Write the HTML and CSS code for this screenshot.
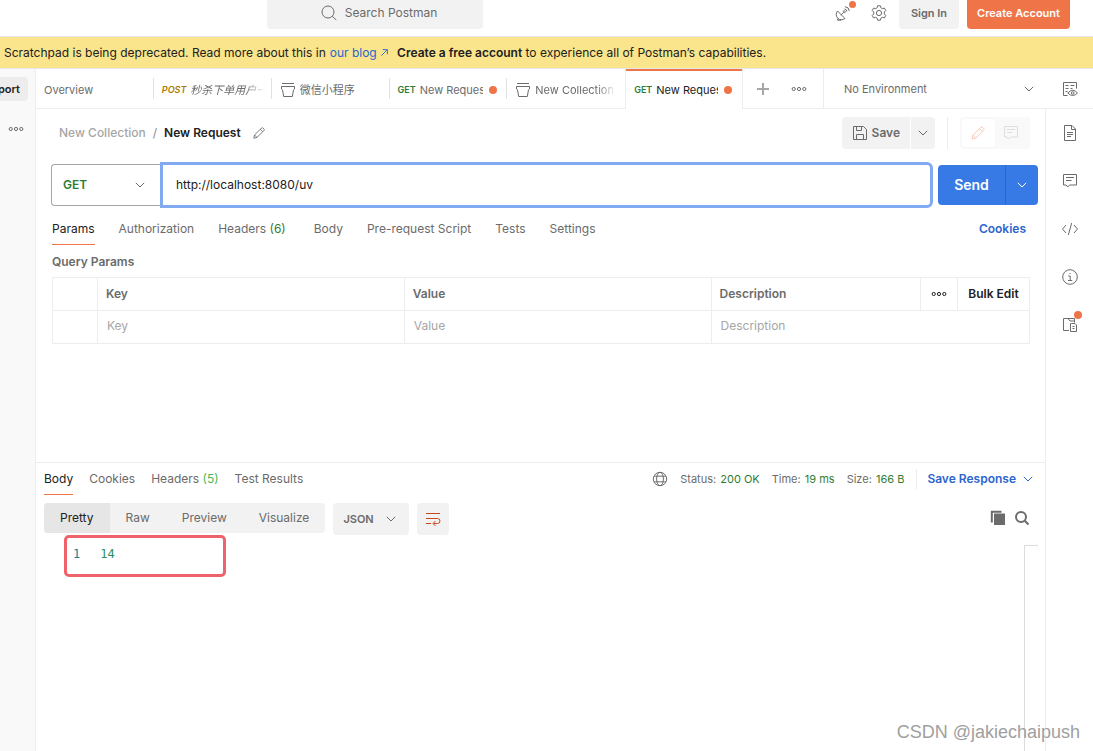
FILE: index.html
```
<!DOCTYPE html>
<html lang="en">
<head>
<meta charset="utf-8">
<meta name="viewport" content="width=device-width, initial-scale=1">
<title>Postman</title>
<link rel="stylesheet" href="styles.css">
</head>
<body>
<svg class="sprite" aria-hidden="true">
  <symbol id="chevron" viewBox="0 0 16 16"><path d="M3.8 5.8 8 10l4.2-4.2"/></symbol>
  <symbol id="dots" viewBox="0 0 16 16"><circle cx="2.700" cy="8" r="1.600"/><circle cx="8" cy="8" r="1.600"/><circle cx="13.300" cy="8" r="1.600"/></symbol>
  <symbol id="bucket" viewBox="0 0 16 16"><path d="M2 1.500h12M1.500 4.500h13v2.500l-1 .8-1.200 6.700H3.700L2.500 7.800l-1-.8z"/></symbol>
  <symbol id="pencil" viewBox="0 0 16 16"><path d="M2 14l.9-3.700 8-8q.8-.8 1.600 0l1.200 1.200q.8.800 0 1.600l-8 8zM9.500 3.700l2.800 2.800M2.900 10.300l2.800 2.800"/></symbol>
  <symbol id="comment" viewBox="0 0 16 16"><path d="M1.500 1.500h13v10.500H7.500l-1.800 2-1.700-2H1.500zM4 4.500h8M4 7.500h5.500"/></symbol>
</svg>

<header class="topbar">
  <button class="search" type="button">
    <svg class="icon" viewBox="0 0 16 16"><circle cx="7" cy="7" r="6"/><path d="M11.300 11.300 15.300 15"/></svg>
    <span>Search Postman</span>
  </button>
  <div class="top-actions">
    <button class="icon-btn has-dot" type="button" aria-label="Capture requests">
      <svg class="icon" viewBox="0 0 16 16"><path d="M2.500 6C.7 8.300.900 11.300 2.700 13.200c1.900 1.900 5 2.100 7.300.3zM5.800 10.200l2.900-2.900M3 13.500l-.5 1.700h3.700M9.500 4q2.300.2 2.500 2.500M10 1.700q4 .3 4.300 4.300"/><circle cx="9.300" cy="6.700" r="1"/></svg>
      <span class="dot dot-corner"></span>
    </button>
    <button class="icon-btn" type="button" aria-label="Settings">
      <svg class="icon" viewBox="0 0 16 16"><path d="M6.600.8h2.800l.5 2 1.500.9 2-.6 1.400 2.400L13.300 7v2l1.500 1.500-1.400 2.400-2-.6-1.500.9-.5 2H6.600l-.5-2-1.500-.9-2 .6-1.400-2.400L2.700 9V7L1.200 5.500l1.400-2.400 2 .6 1.500-.9z"/><circle cx="8" cy="8" r="2.600"/></svg>
    </button>
    <button class="btn btn-plain" type="button">Sign In</button>
    <button class="btn btn-accent" type="button">Create Account</button>
  </div>
</header>

<p class="banner">
  <span>Scratchpad is being deprecated. Read more about this in</span>
  <a href="#">our blog <svg class="arrow" viewBox="0 0 10 10"><path d="M1.500 8.500l6.500-6.500M3 1.800h5.200V7"/></svg></a>
  <span><b>Create a free account</b> to experience all of Postman’s capabilities.</span>
</p>

<div class="shell">
  <aside class="sidebar">
    <div class="import-row"><button class="import" type="button"><span>Import</span></button></div>
    <button class="icon-btn side-more" type="button" aria-label="More options"><svg class="icon"><use href="#dots"/></svg></button>
  </aside>

  <div class="content">
    <div class="tabstrip">
      <nav class="tabs" aria-label="Open tabs">
        <button class="tab" type="button"><span class="tab-name">Overview</span></button>
        <button class="tab preview" type="button"><em class="method post">POST</em><em class="tab-name fade">秒杀下单用户一</em></button>
        <button class="tab" type="button"><svg class="icon"><use href="#bucket"/></svg><span class="tab-name">微信小程序</span></button>
        <button class="tab" type="button"><span class="method get">GET</span><span class="tab-name clip">New Request</span><span class="dot"></span></button>
        <button class="tab" type="button"><svg class="icon"><use href="#bucket"/></svg><span class="tab-name fade">New Collection</span></button>
        <button class="tab active" type="button"><span class="method get">GET</span><span class="tab-name clip">New Request</span><span class="dot"></span></button>
      </nav>
      <div class="tab-tools">
        <button class="icon-btn" type="button" aria-label="New tab"><svg class="icon plus" viewBox="0 0 16 16"><path d="M8 2v12M2 8h12"/></svg></button>
        <button class="icon-btn" type="button" aria-label="Tab options"><svg class="icon"><use href="#dots"/></svg></button>
      </div>
      <div class="environment">
        <select class="env-select" aria-label="Environment"><option>No Environment</option></select>
        <svg class="icon chev"><use href="#chevron"/></svg>
      </div>
      <button class="icon-btn env-view" type="button" aria-label="Environment quick look">
        <svg class="icon" viewBox="0 0 16 16"><path d="M5.500 14.500h-4v-13h13v6M3.500 4.500h3M3.500 7.500h3M3.500 10.500h2M8.500 4.500h4M8.500 7.500h2M5.800 12q5-5.500 9.700 0-4.700 5-9.700 0z"/><circle cx="10.700" cy="12" r="1.300"/></svg>
      </button>
    </div>

    <div class="workspace">
      <main class="panes">
        <section class="request">
          <div class="title-row">
            <div class="crumbs"><a href="#">New Collection</a><span class="slash">/</span><h1>New Request</h1>
              <button class="icon-btn" type="button" aria-label="Rename"><svg class="icon rename" viewBox="0 0 16 16"><use href="#pencil"/></svg></button></div>
            <div class="save-group">
              <button class="save" type="button"><svg class="icon" viewBox="0 0 16 16"><path d="M1.500 1.500h10l3 3v10h-13zM4.500 1.500v4h5v-4M4.500 14.500v-5h7v5"/></svg>Save</button>
              <button class="save-more" type="button" aria-label="Save options"><svg class="icon chev"><use href="#chevron"/></svg></button>
            </div>
            <div class="mode-wrap">
              <div class="mode">
                <button class="mode-btn on" type="button" aria-label="Build"><svg class="icon"><use href="#pencil"/></svg></button>
                <button class="mode-btn" type="button" aria-label="Comment"><svg class="icon"><use href="#comment"/></svg></button>
              </div>
            </div>
          </div>

          <form class="url-row">
            <div class="method-box">
              <select class="method-select" aria-label="Method"><option>GET</option></select>
              <svg class="icon chev"><use href="#chevron"/></svg>
            </div>
            <input class="url" type="text" aria-label="Request URL" value="http://localhost:8080/uv">
            <div class="send-group">
              <button class="send" type="button">Send</button>
              <button class="send-more" type="button" aria-label="Send options"><svg class="icon chev"><use href="#chevron"/></svg></button>
            </div>
          </form>

          <nav class="subtabs request-tabs" aria-label="Request sections">
            <button class="subtab current" type="button">Params</button>
            <button class="subtab" type="button">Authorization</button>
            <button class="subtab with-count" type="button">Headers <span class="count">(6)</span></button>
            <button class="subtab" type="button">Body</button>
            <button class="subtab" type="button">Pre-request Script</button>
            <button class="subtab" type="button">Tests</button>
            <button class="subtab" type="button">Settings</button>
            <a class="cookies" href="#">Cookies</a>
          </nav>

          <h2 class="params-title">Query Params</h2>
          <table class="params">
            <colgroup><col class="c-check"><col class="c-key"><col class="c-value"><col><col class="c-more"><col class="c-bulk"></colgroup>
            <thead>
              <tr><th></th><th>Key</th><th>Value</th><th>Description</th>
                <th class="tool"><button class="icon-btn dark" type="button" aria-label="Column options"><svg class="icon"><use href="#dots"/></svg></button></th>
                <th class="tool"><button class="bulk" type="button">Bulk Edit</button></th></tr>
            </thead>
            <tbody>
              <tr><td></td><td><input type="text" placeholder="Key" aria-label="Key"></td><td><input type="text" placeholder="Value" aria-label="Value"></td><td colspan="3"><input type="text" placeholder="Description" aria-label="Description"></td></tr>
            </tbody>
          </table>
        </section>

        <section class="response">
          <div class="response-head">
            <nav class="subtabs response-tabs" aria-label="Response sections">
              <button class="subtab current" type="button">Body</button>
              <button class="subtab" type="button">Cookies</button>
              <button class="subtab" type="button">Headers <span class="count bright">(5)</span></button>
              <button class="subtab" type="button">Test Results</button>
            </nav>
            <div class="stats">
              <svg class="icon globe" viewBox="0 0 16 16"><circle cx="8" cy="8" r="6.700"/><ellipse cx="8" cy="8" rx="3.400" ry="6.700"/><path d="M2.300 5.200h11.400M2.300 10.800h11.400"/></svg>
              <span>Status: <b>200 OK</b></span><span>Time: <b>19 ms</b></span><span>Size: <b>166 B</b></span>
            </div>
            <button class="save-response" type="button">Save Response<svg class="icon chev"><use href="#chevron"/></svg></button>
          </div>

          <div class="viewbar">
            <div class="views">
              <button class="view on" type="button">Pretty</button>
              <button class="view" type="button">Raw</button>
              <button class="view" type="button">Preview</button>
              <button class="view" type="button">Visualize</button>
            </div>
            <div class="format">
              <select class="format-select" aria-label="Format"><option>JSON</option></select>
              <svg class="icon chev"><use href="#chevron"/></svg>
            </div>
            <button class="wrap" type="button" aria-label="Wrap lines"><svg class="icon" viewBox="0 0 16 16"><path d="M1 2.500h14M1 7.500h11.500q2.500 0 2.500 2.500t-2.500 2.500H8.500M1 12.500h5M10.500 10l-2.500 2.500 2.500 2.500"/></svg></button>
            <div class="view-actions">
              <button class="icon-btn" type="button" aria-label="Copy"><svg class="icon copy" viewBox="0 0 16 16"><path class="solid" d="M4 3.500h11v11.500H4z"/><path class="back" d="M1.800 12.500V1.800H11.500"/></svg></button>
              <button class="icon-btn" type="button" aria-label="Search"><svg class="icon find" viewBox="0 0 16 16"><circle cx="7" cy="7" r="5"/><path d="M10.700 10.700 14.500 14.500"/></svg></button>
            </div>
          </div>

          <div class="code">
            <div class="code-line"><span class="line-no">1</span><code>14</code></div>
            <div class="ruler"></div>
          </div>
        </section>
      </main>

      <aside class="rail">
        <button class="icon-btn" type="button" aria-label="Documentation"><svg class="icon" viewBox="0 0 16 16"><path d="M2.500.5h7.500l3.500 3.500v11.500h-11zM9.500.5v4h4M5 7.500h6M5 9.500h6M5 11.500h4"/></svg></button>
        <button class="icon-btn" type="button" aria-label="Comments"><svg class="icon"><use href="#comment"/></svg></button>
        <button class="icon-btn" type="button" aria-label="Code"><svg class="icon" viewBox="0 0 16 16"><path d="M4 4 .5 8 4 12M12 4l3.500 4L12 12M9.700 2 6.300 14"/></svg></button>
        <button class="icon-btn" type="button" aria-label="Info"><svg class="icon" viewBox="0 0 16 16"><circle cx="8" cy="8" r="7.300"/><path d="M6.300 7h1.900v4.300M6 11.500h4.200M7.500 4.600h1.200"/></svg></button>
        <button class="icon-btn has-dot" type="button" aria-label="Related requests"><svg class="icon" viewBox="0 0 16 16"><path d="M7 13.500H1.500v-12H6l2 2.500h4.500v1.500M5.500 1.500h7v2.500M9.500 6.500h3.500l1.500 1.500v6.500h-6v-8zM10.500 9.500h2M10.500 11.500h2"/></svg><span class="dot dot-corner"></span></button>
      </aside>
    </div>
  </div>
</div>
<div class="watermark">CSDN @jakiechaipush</div>
</body>
</html>
```
FILE: styles.css
```
:root {
  --text: #212121;
  --muted: #6b6b6b;
  --faint: #a6a6a6;
  --line: #ededed;
  --fill: #f2f2f2;
  --accent: #ef7549;
  --blue: #2a65d0;
  --green: #2f7d35;
}
* { box-sizing: border-box; }
body {
  position: relative;
  display: flex;
  flex-direction: column;
  min-height: 100vh;
  margin: 0;
  overflow: hidden;
  background: #fff;
  color: var(--text);
  font: 12px/16px Inter, "Noto Sans CJK SC", sans-serif;
}
button, input, select { margin: 0; padding: 0; border: 0; background: none; color: inherit; font: inherit; }
select { appearance: none; width: 100%; }
a { color: var(--blue); text-decoration: none; }
h1, h2, p { margin: 0; font-size: 12px; line-height: 16px; font-weight: 600; }
.sprite { display: none; }
.icon { display: block; flex: none; width: 16px; height: 16px; fill: none; stroke: currentColor; stroke-width: 1; }
.chev { color: var(--muted); }
.icon-btn { position: relative; display: flex; flex: none; color: var(--muted); }
.dot { flex: none; width: 8px; height: 8px; border-radius: 50%; background: var(--accent); }
.dot-corner { position: absolute; top: -6px; right: -4px; }

/* Top bar */
.topbar { display: flex; justify-content: flex-end; height: 37px; border-bottom: 1px solid #e6e6e6; }
.search {
  display: flex; align-items: center; justify-content: center; gap: 8px;
  width: 216px; height: 29px; margin: 0 auto 0 267px; padding: 0 0 3px 8px;
  border-radius: 0 0 4px 4px; background: var(--fill); color: var(--muted);
}
.top-actions { display: flex; align-items: center; gap: 8px; height: 29px; padding-right: 23px; }
.top-actions .icon-btn { margin: 0 6px; bottom: 2px; }
.top-actions .dot-corner { width: 7px; height: 7px; top: -4px; right: -5px; }
.btn { height: 29px; padding: 0 10px 3px; border-radius: 0 0 4px 4px; font-size: 11px; font-weight: 600; }
.top-actions .btn-plain { min-width: 60px; margin-left: -2px; background: var(--fill); color: var(--muted); }
.btn-accent { min-width: 103px; background: var(--accent); color: #fff; }

.banner {
  display: flex; gap: 4px; align-items: center; height: 32px; padding: 0 4px;
  border-bottom: 1px solid #e6e6e6; background: #fae48c; font-weight: 400; white-space: nowrap;
}
.banner a { margin-right: 4px; }
.banner b { font-weight: 600; }
.arrow { width: 9px; height: 9px; fill: none; stroke: currentColor; }

/* Shell */
.shell { display: flex; flex: 1; min-height: 0; }
.sidebar { flex: none; width: 36px; border-right: 1px solid var(--line); background: #f9f9f9; }
.import-row { display: flex; justify-content: flex-end; height: 40px; padding: 8px 7px; }
.import { display: flex; flex: none; align-items: center; height: 24px; padding: 0 8px; border-radius: 4px; background: #ededed; font-size: 11px; font-weight: 600; }
.side-more { margin: 12px 0 0 8px; }
.content { display: flex; flex: 1; flex-direction: column; min-width: 0; }

.tabstrip { display: flex; height: 40px; border-bottom: 1px solid var(--line); }
.tabs { display: grid; grid-template-columns: repeat(6, 1fr); width: 707px; }
.tab { position: relative; display: flex; align-items: center; gap: 4px; min-width: 0; height: 39px; padding: 3px 8px 0; color: var(--muted); font-size: 11px; text-align: left; }
.tab::after { content: ""; position: absolute; top: 9px; right: 0; width: 1px; height: 21px; background: #e2e2e2; }
.tab:nth-last-child(-n+2)::after { display: none; }
.tab.active { height: 40px; padding-bottom: 1px; border: 1px solid var(--line); border-width: 0 1px; background: #fff; color: var(--text); box-shadow: inset 0 2px var(--accent); }
.method { flex: none; font-size: 9px; font-weight: 600; }
.get { color: var(--green); }
.post { color: #ad7a03; }
.tab-name { min-width: 0; overflow: hidden; white-space: nowrap; }
.clip { flex: 1; }
.tab .dot { margin: 0 2px; }
.fade { flex: 1; -webkit-mask-image: linear-gradient(90deg, #000 75%, transparent); mask-image: linear-gradient(90deg, #000 75%, transparent); }
.tab-tools { display: flex; gap: 20px; align-items: center; width: 81px; padding: 0 12px; border-right: 1px solid var(--line); }
.plus { stroke: #a6a6a6; stroke-width: 2; }
.environment { position: relative; flex: 1; display: flex; min-width: 120px; }
.environment .chev { position: absolute; right: 25px; top: 12px; pointer-events: none; }
.env-select { padding: 0 40px 0 20px; color: var(--muted); font-size: 11px; }
.env-view { align-items: center; margin-right: 15px; }

.workspace { display: flex; flex: 1; min-height: 0; }
.panes { display: flex; flex: 1; flex-direction: column; min-width: 0; }
.rail { display: flex; flex: none; flex-direction: column; gap: 32px; align-items: center; width: 48px; padding-top: 16px; border-left: 1px solid var(--line); }

/* Request */
.request { height: 353px; padding: 8px 15px 0; }
.title-row { display: flex; align-items: center; height: 32px; }
.crumbs { display: flex; gap: 7px; align-items: center; margin-right: auto; padding-left: 8px; }
.crumbs a { color: var(--faint); font-weight: 500; }
.slash { color: #8a8a8a; }
.rename { width: 14px; height: 14px; margin-left: 4px; }
.save-group { display: flex; gap: 1px; color: var(--muted); }
.save { display: flex; gap: 4px; align-items: center; height: 32px; padding: 0 10px; border-radius: 4px 0 0 4px; background: var(--fill); font-weight: 600; }
.save-more { height: 32px; padding: 0 4px; border-radius: 0 4px 4px 0; background: var(--fill); }
.mode-wrap { margin-left: 12px; padding-left: 12px; border-left: 1px solid var(--line); }
.mode { display: flex; padding: 2px; border-radius: 4px; background: #f9f9f9; color: #dedede; }
.mode-btn { width: 33px; height: 28px; padding: 6px 8px; border-radius: 4px; }
.mode-btn.on { background: #fff; color: #fbc8b5; }

.url-row { display: flex; align-items: center; height: 46px; margin: 13px -8px 0 0; }
.method-box { position: relative; flex: none; width: 109px; height: 42px; border: 1px solid var(--faint); border-right: 0; border-radius: 4px 0 0 4px; }
.method-select { height: 40px; padding-left: 11px; color: var(--green); font-weight: 600; }
.method-box .chev { position: absolute; top: 12px; right: 12px; pointer-events: none; }
.url { flex: 1; min-width: 0; height: 46px; padding: 0 13px 2px; border: 3px solid #82aaf0; border-radius: 0 6px 6px 0; outline: 0; }
.send-group { display: flex; margin-left: 5px; border-radius: 4px; overflow: hidden; background: #377ae6; color: #fff; }
.send { width: 67px; height: 40px; font-size: 14px; font-weight: 600; }
.send-more { height: 40px; padding: 0 8px; border-left: 1px solid #2a65d0; }
.send-more .chev { color: #fff; }

.subtabs { display: flex; gap: 24px; color: var(--muted); white-space: nowrap; }
.subtab { height: 32px; border-bottom: 1px solid transparent; }
.subtab.current { border-color: var(--accent); color: var(--text); }
.subtab.with-count { padding-right: 4px; }
.count { color: var(--green); }
.count.bright { color: #4bb855; }
.request-tabs { margin: 5px 4px 0 1px; }
.cookies { margin: 8px 0 0 auto; font-weight: 600; }
.params-title { margin: 9px 1px 7px; color: var(--muted); }
.params { width: calc(100% - 1px); margin-left: 1px; border-collapse: collapse; table-layout: fixed; color: var(--muted); }
.c-check { width: 45px; }
.c-key, .c-value { width: 31.4%; }
.c-more { width: 37px; }
.c-bulk { width: 72px; }
.params th, .params td { height: 33px; padding: 0 8px; border: 1px solid var(--line); text-align: left; font-weight: 600; }
.params .tool { padding: 0; }
.tool button { margin: 0 auto; }
.params .dark { color: var(--text); }
.bulk { display: block; color: var(--text); font-weight: 600; }
.params td { padding-bottom: 2px; }
.params input { display: block; width: 100%; padding-left: 1px; font-weight: 400; outline: 0; }
.params input::placeholder { color: var(--faint); }

/* Response */
.response { display: flex; flex: 1; flex-direction: column; border-top: 1px solid var(--line); }
.response-head { display: flex; align-items: center; height: 32px; padding: 0 9px 0 8px; }
.response-tabs { gap: 16px; margin-right: auto; }
.stats { display: flex; gap: 12px; align-items: center; color: var(--muted); font-size: 11px; white-space: nowrap; }
.stats b { margin-left: 1px; color: var(--green); font-weight: 400; }
.save-response { display: flex; gap: 4px; align-items: center; height: 20px; margin-left: 12px; padding-left: 10px; border-left: 1px solid var(--line); color: var(--blue); font-weight: 600; }
.save-response .chev { color: var(--blue); }
.viewbar { display: flex; gap: 8px; align-items: flex-start; height: 32px; margin-top: 8px; padding: 0 15px 0 8px; color: var(--muted); }
.views { display: flex; overflow: hidden; border-radius: 4px; background: var(--fill); }
.view { height: 30px; padding: 0 16px; }
.view.on { background: #e6e6e6; color: var(--text); }
.format { position: relative; width: 76px; border-radius: 4px; background: var(--fill); }
.format-select { height: 32px; padding-left: 10px; font-size: 11px; font-weight: 600; }
.format .chev { position: absolute; top: 8px; right: 10px; pointer-events: none; }
.wrap { height: 32px; padding: 0 8px; border-radius: 4px; background: var(--fill); color: #c9491f; }
.view-actions { display: flex; gap: 8px; margin: 7px 0 0 auto; }
.solid { fill: currentColor; stroke: none; }
.back { stroke-width: 2; }
.find { stroke-width: 2; }
.code { display: flex; flex: 1; justify-content: space-between; padding: 0 7px 0 28px; font: 12px/18px "DejaVu Sans Mono", monospace; }
.code-line { display: flex; gap: 20px; width: 162px; height: 42px; padding: 7px 6px; border: 3px solid #ee6269; border-radius: 5px; }
.line-no { color: #237893; }
.code code { color: #2f8f5b; font: inherit; }
.ruler { width: 14px; margin-top: 10px; border: 1px solid #dcdcdc; border-width: 1px 0 0 1px; }

.watermark { position: absolute; right: 13px; bottom: 7px; color: #a0a0a0; font: 18px/24px "Liberation Sans", sans-serif; text-shadow: 1px 1px #fff; }
```
